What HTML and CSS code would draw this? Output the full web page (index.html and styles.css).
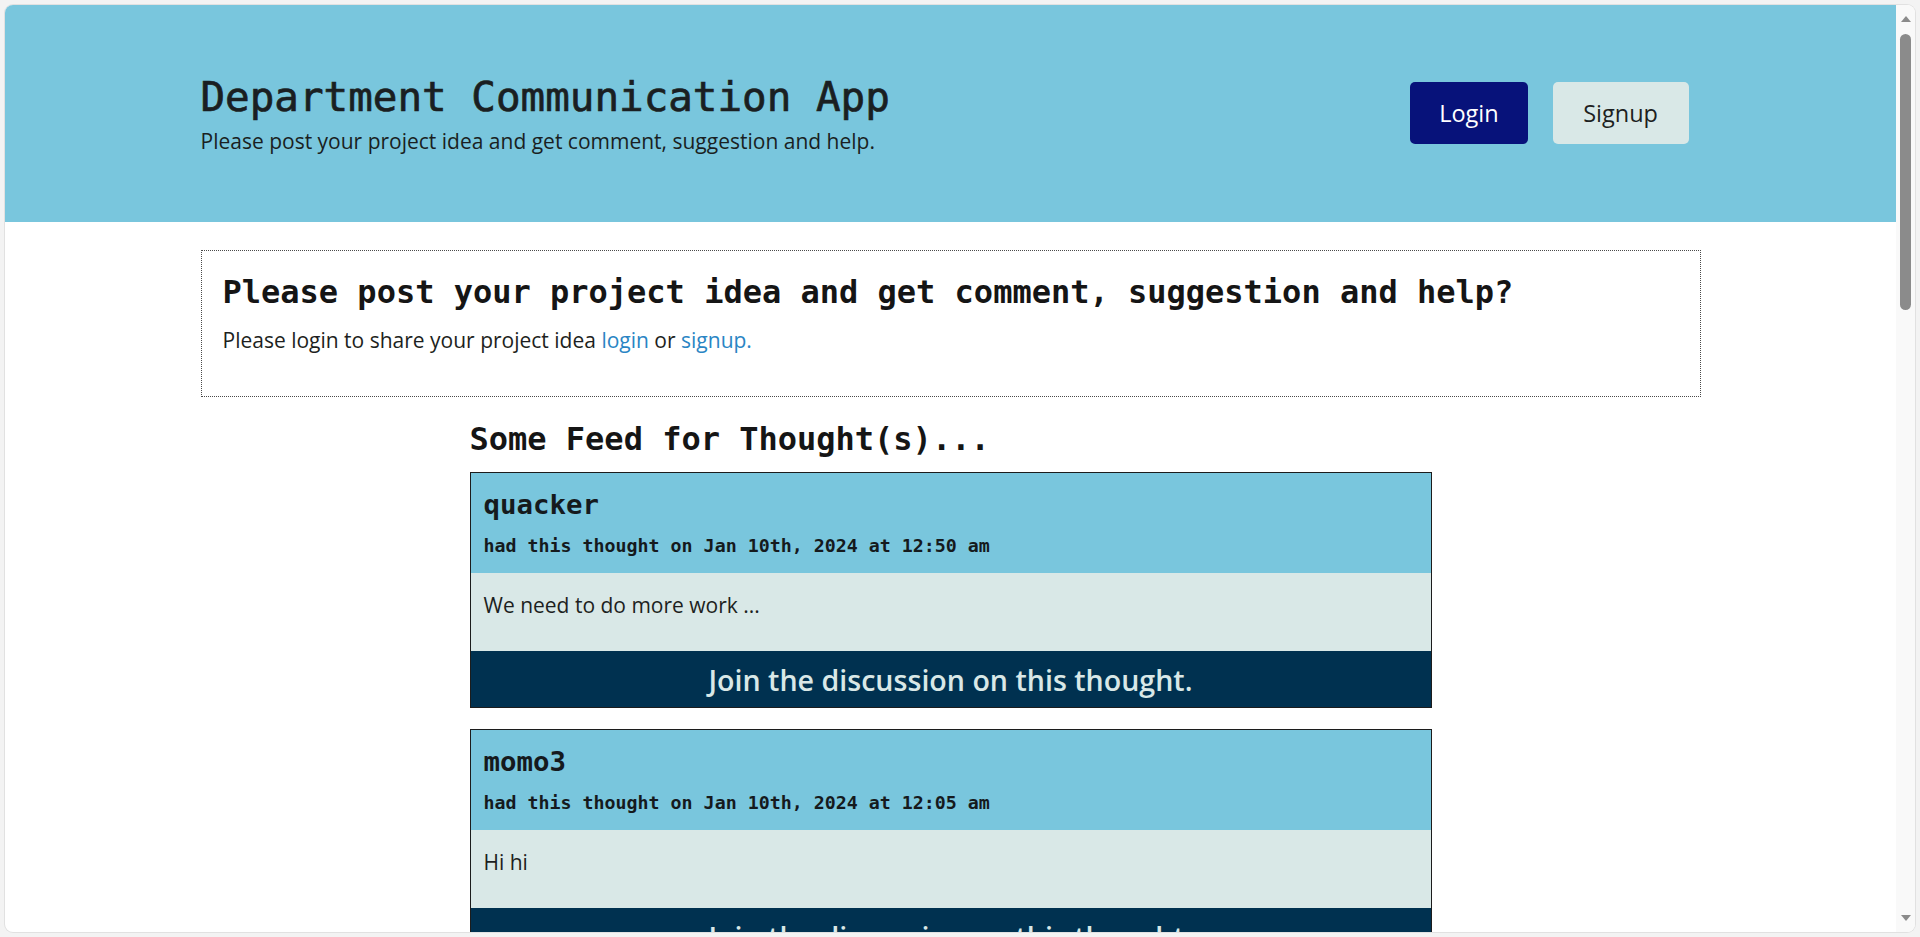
FILE: index.html
```html
<!DOCTYPE html>
<html lang="en">
<head>
<meta charset="utf-8">
<title>Department Communication App</title>
<link rel="stylesheet" href="styles.css">
</head>
<body>
<div class="window">
  <div class="viewport">
    <header class="site-header">
      <div class="container header-inner">
        <div class="brand">
          <h1 class="brand-title">Department Communication App</h1>
          <p class="brand-sub">Please post your project idea and get comment, suggestion and help.</p>
        </div>
        <nav class="auth">
          <a class="btn btn-login" href="#">Login</a>
          <a class="btn btn-signup" href="#">Signup</a>
        </nav>
      </div>
    </header>

    <main class="container main">
      <section class="notice">
        <h3 class="notice-title">Please post your project idea and get comment, suggestion and help?</h3>
        <p class="notice-text">Please login to share your project idea <a href="#">login</a> or <a href="#">signup.</a></p>
      </section>

      <section class="feed">
        <h3 class="feed-title">Some Feed for Thought(s)...</h3>

        <article class="card">
          <div class="card-head">
            <h4 class="card-user">quacker</h4>
            <span class="card-date">had this thought on Jan 10th, 2024 at 12:50 am</span>
          </div>
          <div class="card-body"><p>We need to do more work ...</p></div>
          <a class="card-foot" href="#">Join the discussion on this thought.</a>
        </article>

        <article class="card">
          <div class="card-head">
            <h4 class="card-user">momo3</h4>
            <span class="card-date">had this thought on Jan 10th, 2024 at 12:05 am</span>
          </div>
          <div class="card-body"><p>Hi hi</p></div>
          <a class="card-foot" href="#">Join the discussion on this thought.</a>
        </article>
      </section>
    </main>
  </div>

  <div class="scrollbar" aria-hidden="true">
    <div class="sb-btn sb-up">
      <svg width="10" height="6" viewBox="0 0 10 6"><path d="M5 0 L10 6 L0 6 Z" fill="#8b8b8b"/></svg>
    </div>
    <div class="sb-thumb"></div>
    <div class="sb-btn sb-down">
      <svg width="10" height="6" viewBox="0 0 10 6"><path d="M0 0 L10 0 L5 6 Z" fill="#8b8b8b"/></svg>
    </div>
  </div>
</div>
</body>
</html>
```

FILE: styles.css
```css
* {
  box-sizing: border-box;
}

html,
body {
  margin: 0;
  height: 100%;
}

body {
  background: #f3f3f3;
  padding: 5px;
  overflow: hidden;
  font-family: "Open Sans", "Noto Sans", sans-serif;
  color: #212529;
}

.window {
  width: 1910px;
  height: 927px;
  background: #ffffff;
  border-radius: 8px;
  box-shadow: 0 0 0 1px #e1e1e1;
  overflow: hidden;
  display: flex;
}

.viewport {
  flex: 1;
  min-width: 0;
  height: 100%;
  overflow: hidden;
}

/* scrollbar column */
.scrollbar {
  width: 19px;
  flex: none;
  height: 100%;
  background: #f9f9f9;
  display: flex;
  flex-direction: column;
  align-items: center;
}

.sb-btn {
  height: 25px;
  width: 100%;
  display: flex;
  justify-content: center;
}

.sb-btn svg {
  display: block;
}

.sb-up {
  padding-top: 11px;
}

.sb-down {
  margin-top: auto;
  padding-top: 8px;
}

.sb-thumb {
  width: 11px;
  height: 276px;
  margin-top: 4px;
  background: #8b8b8b;
  border-radius: 6px;
}

.container {
  width: 1500px;
  margin: 0 auto;
}

/* header */
.site-header {
  background: #79c6dd;
  height: 217px;
  padding-top: 68px;
}

.header-inner {
  display: flex;
  justify-content: space-between;
  align-items: flex-start;
}

.brand-title {
  margin: 0;
  font-family: "DejaVu Sans Mono", monospace;
  font-weight: 400;
  font-size: 40.9px;
  line-height: 49px;
  color: #1a1f22;
  -webkit-text-stroke: 0.7px #1a1f22;
}

.brand-sub {
  margin: 4px 0 0;
  font-size: 21px;
  line-height: 31.5px;
  color: #1a1f22;
}

.auth {
  display: flex;
  gap: 25px;
  margin-top: 9px;
  margin-right: 12px;
}

.btn {
  display: block;
  height: 62px;
  line-height: 62px;
  border-radius: 5px;
  font-size: 23.5px;
  text-decoration: none;
}

.btn-login {
  background: #07127a;
  color: #ffffff;
  padding: 0 29px;
}

.btn-signup {
  background: #d9e8e7;
  color: #1d1f21;
  padding: 0 30.5px;
}

/* main */
.main {
  padding-top: 28px;
  padding-bottom: 40px;
}

.notice {
  border: 1px dotted #4a4a4a;
  padding: 22px 20px 39px 21px;
}

.notice-title {
  margin: 0;
  font-family: "DejaVu Sans Mono", monospace;
  font-weight: 700;
  font-size: 32px;
  line-height: 38.6px;
  color: #151515;
}

.notice-text {
  margin: 13.6px 0 0;
  font-size: 21px;
  line-height: 31.5px;
  color: #1d1f21;
}

.notice-text a {
  color: #2a85c4;
  text-decoration: none;
}

.feed {
  width: 962px;
  margin: 23.6px auto 0;
}

.feed-title {
  margin: 0 0 12.8px;
  font-family: "DejaVu Sans Mono", monospace;
  font-weight: 700;
  font-size: 32px;
  line-height: 38.6px;
  color: #151515;
}

.card {
  border: 1px solid #1c1c1c;
  margin-bottom: 21px;
}

.card-head {
  background: #79c6dd;
  padding: 15px 13px 16px;
  color: #151a1d;
}

.card-user {
  margin: 0 0 14px;
  font-family: "DejaVu Sans Mono", monospace;
  font-weight: 700;
  font-size: 27.4px;
  line-height: 33px;
}

.card-date {
  display: block;
  font-family: "DejaVu Sans Mono", monospace;
  font-weight: 700;
  font-size: 18.3px;
  line-height: 22px;
}

.card-body {
  background: #d9e8e7;
  padding: 17px 13px 29.5px;
}

.card-body p {
  margin: 0;
  font-size: 21px;
  line-height: 31.5px;
  color: #1d1f21;
}

.card-foot {
  display: block;
  background: #003150;
  color: #d9e8e7;
  text-align: center;
  text-decoration: none;
  font-size: 28.6px;
  font-weight: 600;
  line-height: 35px;
  padding: 11px 0 10px;
}
```
